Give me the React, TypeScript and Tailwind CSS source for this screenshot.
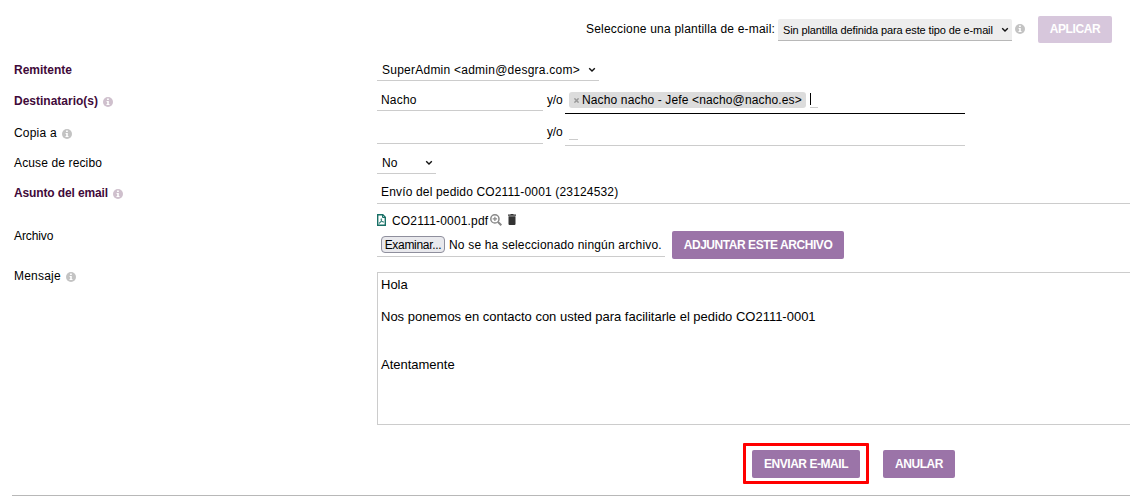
import type { ReactNode } from "react";

function Info({ tint = "text-[#c3c3c3]" }: { tint?: string }) {
  return (
    <svg viewBox="0 0 10 10" className={"block size-[10px] shrink-0 " + tint}>
      <circle cx="5" cy="5" r="5" fill="currentColor" />
      <path d="M4.100 1.600h1.700v1.500H4.100zM3.600 4h2.200v2.900h.7v1.200H3.500V6.900h.7V5.100h-.6z" fill="#fff" />
    </svg>
  );
}

function Chevron() {
  return (
    <svg viewBox="0 0 8 6" className="block h-[6px] w-[8px] shrink-0">
      <path d="M1.2 1.3L4 4.1l2.8-2.8" fill="none" stroke="#111" strokeWidth="1.4" />
    </svg>
  );
}

function Row({
  label,
  labelClass,
  info,
  required,
  height,
  children,
}: {
  label: string;
  labelClass: string;
  info?: boolean;
  required?: boolean;
  height: string;
  children: ReactNode;
}) {
  return (
    <div className={"flex pl-[14px] " + height}>
      <div className={"flex w-[363px] shrink-0 items-start " + labelClass}>
        <span className={required ? "font-bold text-[#3f0a3a]" : ""}>{label}</span>
        {info && (
          <span className="ml-[5px] pt-[4px]">
            <Info tint={required ? "text-[#cfc0cd]" : "text-[#c3c3c3]"} />
          </span>
        )}
      </div>
      {children}
    </div>
  );
}

const button =
  "flex h-[28px] items-center justify-center rounded-[2px] bg-[#9b74a8] text-[12px] font-bold tracking-[-0.45px] text-white";

export default function App() {
  return (
    <div className="h-[504px] w-[1130px] overflow-hidden whitespace-nowrap bg-white font-['Liberation_Sans',Arial,sans-serif] text-[12px] leading-[16px] text-black">
      <header className="flex h-[55px] items-start pl-[586px]">
        <span className="w-[192px] shrink-0 pt-[21px] tracking-[0.2px]">
          Seleccione una plantilla de e-mail:
        </span>
        <div className="mt-[19px] flex h-[22px] w-[234px] shrink-0 items-center justify-between rounded-t-[2px] border-b border-[#b8b8b8] bg-[#ededed] pl-[5px] pr-[3px] text-[11px]">
          <span className="tracking-[-0.13px]">Sin plantilla definida para este tipo de e-mail</span>
          <Chevron />
        </div>
        <span className="ml-[3px] pt-[24px]">
          <Info />
        </span>
        <div className="ml-[13px] mt-[16px] flex h-[27px] w-[74px] items-center justify-center rounded-[2px] bg-[#d7c7dc] pb-[1px] font-bold tracking-[-0.4px] text-white">
          APLICAR
        </div>
      </header>

      <Row label="Remitente" required height="h-[26px]" labelClass="pt-[7px]">
        <div className="flex w-[222px] justify-between border-b border-[#ccc] pl-[5px] pr-[3px] pt-[7px]">
          <span className="tracking-[0.24px]">SuperAdmin &lt;admin@desgra.com&gt;</span>
          <span className="pt-[5px]">
            <Chevron />
          </span>
        </div>
      </Row>

      <Row label="Destinatario(s)" required info height="h-[33px]" labelClass="pt-[12px]">
        <div className="h-[30px] w-[166px] border-b border-[#ccc] pl-[4px] pt-[11px] tracking-[0.2px]">
          Nacho
        </div>
        <span className="w-[22px] pl-[4px] pt-[11px] tracking-[-0.2px]">y/o</span>
        <div className="flex w-[400px] items-start border-b border-black pl-[4px] pt-[11px]">
          <div className="flex h-[16px] w-[237px] items-center rounded-[3px] bg-[#dcdcdc] pl-[5px]">
            <svg viewBox="0 0 5 5" className="mr-[3px] size-[5px]">
              <path d="M.4.4l4.2 4.2M4.6.4L.4 4.6" stroke="#999" strokeWidth="1.5" />
            </svg>
            <span className="tracking-[0.14px]">Nacho nacho - Jefe &lt;nacho@nacho.es&gt;</span>
          </div>
          <div className="ml-[4px] h-[16px] w-[8px] border-b border-[#ccc]">
            <div className="mt-[1px] h-[12px] w-px bg-black" />
          </div>
        </div>
      </Row>

      <Row label="Copia a" info height="h-[32px]" labelClass="pt-[11px] tracking-[0.2px]">
        <div className="h-[30px] w-[166px] border-b border-[#ccc]" />
        <span className="w-[22px] pl-[4px] pt-[10px] tracking-[-0.2px]">y/o</span>
        <div className="w-[400px] border-b border-[#ccc] pl-[4px] pt-[11px]">
          <div className="h-[15px] w-[9px] border-b border-[#ccc]" />
        </div>
      </Row>

      <Row label="Acuse de recibo" height="h-[28px]" labelClass="pt-[9px] tracking-[0.13px]">
        <div className="flex w-[59px] justify-between border-b border-[#ccc] pl-[5px] pr-[3px] pt-[9px]">
          <span className="tracking-[0.2px]">No</span>
          <span className="pt-[5px]">
            <Chevron />
          </span>
        </div>
      </Row>

      <Row label="Asunto del email" required info height="h-[30px]" labelClass="pt-[11px] tracking-[-0.13px]">
        <div className="grow border-b border-[#ccc] pl-[4px] pt-[10px] tracking-[0.16px]">
          Envío del pedido CO2111-0001 (23124532)
        </div>
      </Row>

      <Row label="Archivo" height="h-[68px]" labelClass="pt-[24px] tracking-[-0.1px]">
        <div>
          <div className="flex h-[27px] items-start pt-[9px]">
            <svg viewBox="0 0 9 12" className="mt-[1px] h-[12px] w-[9px]">
              <path d="M1 .7h4.8L8.3 3.2v8.1H.7V.7z" fill="#fff" stroke="#187066" strokeWidth="1.4" />
              <path d="M5.5.8v2.7h2.8" fill="none" stroke="#187066" />
              <path d="M4.2 4.7c.7 0 .4 1.4-.1 2.5C3.5 8.500 2.500 9.700 2.100 9.300c-.4-.5 1.100-1.500 2.500-1.700 1.100-.2 2.300 0 2.100.5-.3.5-1.400-.2-2-1.200-.6-.9-1-2.200-.5-2.200z" fill="none" stroke="#187066" strokeWidth=".8" />
            </svg>
            <span className="ml-[6px] w-[98px] tracking-[0.18px]">CO2111-0001.pdf</span>
            <svg viewBox="0 0 12 12" className="mt-[1px] size-[12px]" fill="none" stroke="#888">
              <circle cx="4.900" cy="4.900" r="4.100" strokeWidth="1.500" />
              <path d="M8 8l3.300 3.300" strokeWidth="2" />
              <path d="M4.900 2.700v4.400M2.700 4.900h4.400" strokeWidth="1.200" />
            </svg>
            <svg viewBox="0 0 8 11" className="ml-[6px] mt-[1px] h-[11px] w-[8px]" fill="#333">
              <path d="M0 .6h2.300L2.800 0h2.400l.5.6H8v1.200H0zM.5 2.200h7v7.700A1.100 1.100 0 0 1 6.400 11H1.600A1.100 1.100 0 0 1 .5 9.900z" />
            </svg>
          </div>
          <div className="flex">
            <div className="flex h-[26px] w-[288px] items-start border-b border-[#ccc] pl-[4px] pt-[5px]">
              <div className="flex h-[17px] w-[64px] items-center justify-center rounded-[4px] border border-[#8f8f9d] bg-[#e9e9ed] tracking-[-0.3px]">
                Examinar...
              </div>
              <span className="ml-[4px] pt-[1px] tracking-[0.18px]">No se ha seleccionado ningún archivo.</span>
            </div>
            <div className={button + " ml-[7px] w-[172px]"}>ADJUNTAR ESTE ARCHIVO</div>
          </div>
        </div>
      </Row>

      <Row label="Mensaje" info height="h-[153px]" labelClass="-mt-[4px] tracking-[0.2px]">
        <div className="-mr-[10px] grow whitespace-pre border border-[#ccc] pl-[3px] pt-[4px] text-[13px] leading-[16px] tracking-[-0.01px]">
          {"Hola\n\nNos ponemos en contacto con usted para facilitarle el pedido CO2111-0001\n\n\nAtentamente"}
        </div>
      </Row>

      <footer className="ml-[12px] flex h-[71px] items-start border-b border-[#b8b8b8] pl-[731px] pt-[18px]">
        <div className="flex h-[41px] w-[126px] justify-center rounded-[1px] border-[3px] border-[#ff0000] pt-[4px]">
          <div className={button + " w-[108px]"}>ENVIAR E-MAIL</div>
        </div>
        <div className={button + " ml-[14px] mt-[7px] w-[72px]"}>ANULAR</div>
      </footer>
    </div>
  );
}
